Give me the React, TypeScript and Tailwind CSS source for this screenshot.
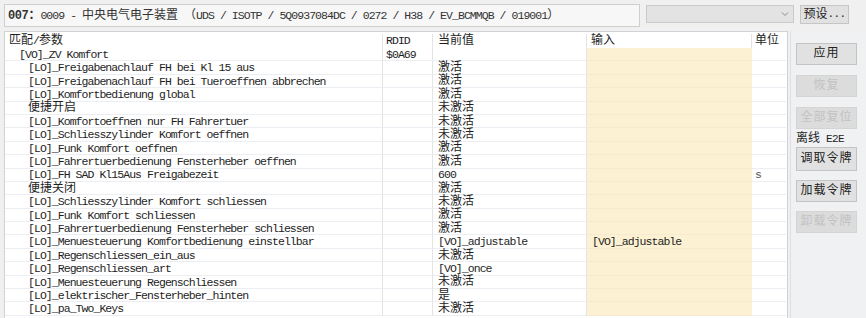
import React from 'react';

interface Row {
  name: string;
  indent: number;
  rdid?: string;
  value?: string;
  input?: string;
  unit?: string;
}

const rows: Row[] = [
  { name: '[VO]_ZV Komfort', indent: 1, rdid: '$0A69' },
  { name: '[LO]_Freigabenachlauf FH bei Kl 15 aus', indent: 2, value: '激活' },
  { name: '[LO]_Freigabenachlauf FH bei Tueroeffnen abbrechen', indent: 2, value: '激活' },
  { name: '[LO]_Komfortbedienung global', indent: 2, value: '激活' },
  { name: '便捷开启', indent: 2, value: '未激活' },
  { name: '[LO]_Komfortoeffnen nur FH Fahrertuer', indent: 2, value: '未激活' },
  { name: '[LO]_Schliesszylinder Komfort oeffnen', indent: 2, value: '未激活' },
  { name: '[LO]_Funk Komfort oeffnen', indent: 2, value: '激活' },
  { name: '[LO]_Fahrertuerbedienung Fensterheber oeffnen', indent: 2, value: '激活' },
  { name: '[LO]_FH SAD Kl15Aus Freigabezeit', indent: 2, value: '600', unit: 's' },
  { name: '便捷关闭', indent: 2, value: '激活' },
  { name: '[LO]_Schliesszylinder Komfort schliessen', indent: 2, value: '未激活' },
  { name: '[LO]_Funk Komfort schliessen', indent: 2, value: '激活' },
  { name: '[LO]_Fahrertuerbedienung Fensterheber schliessen', indent: 2, value: '激活' },
  { name: '[LO]_Menuesteuerung Komfortbedienung einstellbar', indent: 2, value: '[VO]_adjustable', input: '[VO]_adjustable' },
  { name: '[LO]_Regenschliessen_ein_aus', indent: 2, value: '未激活' },
  { name: '[LO]_Regenschliessen_art', indent: 2, value: '[VO]_once' },
  { name: '[LO]_Menuesteuerung Regenschliessen', indent: 2, value: '未激活' },
  { name: '[LO]_elektrischer_Fensterheber_hinten', indent: 2, value: '是' },
  { name: '[LO]_pa_Two_Keys', indent: 2, value: '未激活' },
];

// split text into CJK / latin runs so each gets its own size
const T: React.FC<{ s?: string }> = ({ s }) => {
  if (!s) return null;
  const parts = s.match(/[\u3000-\u9fff\uff00-\uffef]+|[^\u3000-\u9fff\uff00-\uffef]+/g) || [];
  return (
    <>
      {parts.map((p, i) =>
        /[\u3000-\u9fff\uff00-\uffef]/.test(p) ? (
          <span key={i} className="text-[12px] tracking-normal">{p}</span>
        ) : (
          <span key={i} className="text-[11.5px] tracking-[-0.95px] whitespace-pre">{p}</span>
        )
      )}
    </>
  );
};

const Btn: React.FC<{ label: string; disabled?: boolean; className?: string }> = ({ label, disabled, className }) => (
  <div
    className={`w-[61px] h-[22px] flex items-center justify-center border text-[12px] tracking-[1px] ${
      disabled ? 'bg-[#dcdcdc] border-[#d4d4d4] text-[#c2c2c2]' : 'bg-[#e1e1e1] border-[#c4c4c4] text-[#222]'
    } ${className || ''}`}
  >
    {label}
  </div>
);

const App: React.FC = () => {
  return (
    <div
      className="w-[866px] h-[318px] overflow-hidden bg-[#f0f0f0] text-[#1e1e1e] pt-[4px]"
      style={{ fontFamily: '"Liberation Mono", "Noto Sans CJK SC", monospace' }}
    >
      {/* TOP BAR */}
      <div className="flex items-start h-[23px] pl-[4px]">
        <div className="w-[636px] h-[23px] border border-[#cfcfcf] bg-[#f7f7f7] flex items-center pl-[3px] leading-none text-[#333]">
          <span className="font-bold text-[12px] tracking-[-0.4px]">007</span>
          <span className="font-bold text-[12px]">：</span>
          <T s="0009 - 中央电气电子装置 " />
          <T s="（UDS / ISOTP / 5Q0937084DC / 0272 / H38 / EV_BCMMQB / 019001）" />
        </div>
        <div className="ml-[6px] mt-[1px] w-[148px] h-[18px] bg-[#e3e3e3] border border-[#cacaca] flex items-center justify-end pr-[4px]">
          <svg width="8" height="6" viewBox="0 0 8 6" fill="none" stroke="#8a8a8a" strokeWidth="1">
            <path d="M1 1.5l3 3 3-3" />
          </svg>
        </div>
        <div className="ml-[6px] mt-[1px] w-[49px] h-[19px] bg-[#e1e1e1] border border-[#c6c6c6] flex items-center justify-center text-[12px] leading-none">
          预设<span className="text-[11px] tracking-[-0.6px]">...</span>
        </div>
      </div>

      <div className="flex mt-[4px] pl-[4px]">
        {/* TABLE */}
        <div className="w-[784px] h-[300px] bg-white border border-[#cfd3d8] leading-none">
          <div className="flex h-[16px] items-center pt-[2px]">
            <div className="w-[378px] h-full pl-[4px] flex items-center border-r border-[#e4e4e4]"><T s="匹配/参数" /></div>
            <div className="w-[50px] h-full pl-[3px] flex items-center border-r border-[#e4e4e4]"><T s="RDID" /></div>
            <div className="w-[154px] h-full pl-[5px] flex items-center border-r border-[#e4e4e4]"><T s="当前值" /></div>
            <div className="w-[165px] h-full pl-[4px] flex items-center border-r border-[#e4e4e4]"><T s="输入" /></div>
            <div className="w-[34px] h-full pl-[3px] flex items-center"><T s="单位" /></div>
          </div>
          {rows.map((r, i) => (
            <div key={i} className="flex h-[13.4px]">
              <div
                className={`w-[378px] h-full pt-[1px] flex items-center border-r border-b border-r-[#e4e4e4] border-b-[#ebeff3] ${
                  r.indent === 1 ? 'pl-[14px]' : 'pl-[23px]'
                }`}
              >
                <T s={r.name} />
              </div>
              <div className="w-[50px] h-full pl-[3px] pt-[1px] flex items-center border-r border-b border-r-[#e4e4e4] border-b-[#ebeff3]"><T s={r.rdid} /></div>
              <div className="w-[154px] h-full pl-[5px] pt-[1px] flex items-center border-r border-b border-r-[#e4e4e4] border-b-[#ebeff3]"><T s={r.value} /></div>
              <div className="w-[165px] h-full pl-[5px] pt-[1px] flex items-center bg-[#fcf2d3] border-b border-[#f6ead0]"><T s={r.input} /></div>
              <div className="w-[34px] h-full pl-[3px] pt-[1px] flex items-center border-b border-[#ebeff3] text-[#555]"><T s={r.unit} /></div>
            </div>
          ))}
        </div>

        {/* RIGHT BUTTONS */}
        <div className="flex-1 ml-[2px] h-[300px] border-l border-[#dde1e6] bg-[#eff1f3] flex flex-col pl-[5px] pt-[12px]">
          <Btn label="应用" />
          <Btn label="恢复" disabled className="mt-[10px]" />
          <Btn label="全部复位" disabled className="mt-[10px]" />
          <div className="mt-[3px] h-[14px] flex items-center text-[12px] leading-none">
            离线<span className="text-[11px] tracking-[-0.6px] whitespace-pre"> E2E</span>
          </div>
          <Btn label="调取令牌" className="mt-[1px] h-[24px]" />
          <Btn label="加载令牌" className="mt-[9px]" />
          <Btn label="卸载令牌" disabled className="mt-[9px]" />
        </div>
      </div>
    </div>
  );
};

export default App;
